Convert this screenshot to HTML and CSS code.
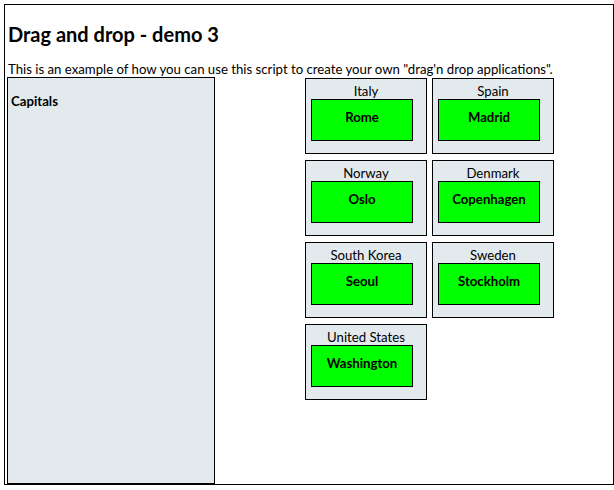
FILE: index.html
```html
<!DOCTYPE html>
<html>
<head>
<meta charset="utf-8">
<link rel="stylesheet" href="styles.css">
</head>
<body>
<div class="frame">
  <h2 class="title">Drag and drop - demo 3</h2>
  <p class="intro">This is an example of how you can use this script to create your own "drag'n drop applications".</p>
  <div class="workspace">
    <div class="capitals">
      <div class="capitals-title">Capitals</div>
    </div>
    <div class="countries">
      <div class="country"><div class="country-name">Italy</div><div class="capital">Rome</div></div>
      <div class="country"><div class="country-name">Spain</div><div class="capital">Madrid</div></div>
      <div class="country"><div class="country-name">Norway</div><div class="capital">Oslo</div></div>
      <div class="country"><div class="country-name">Denmark</div><div class="capital">Copenhagen</div></div>
      <div class="country"><div class="country-name">South Korea</div><div class="capital">Seoul</div></div>
      <div class="country"><div class="country-name">Sweden</div><div class="capital">Stockholm</div></div>
      <div class="country"><div class="country-name">United States</div><div class="capital">Washington</div></div>
    </div>
  </div>
</div>
</body>
</html>
```
FILE: styles.css
```css
html, body {
  margin: 0;
  padding: 0;
  background: #fff;
}
body {
  padding: 4px;
  font-family: "Lato", "DejaVu Sans", sans-serif;
  font-size: 13.2px;
  color: #000;
}
.frame {
  width: 605px;
  height: 479px;
  border: 1px solid #000;
  padding: 0 1px 0 2px;
}
.title {
  margin: 18px 0 15px 1px;
  font-size: 20px;
  line-height: 23px;
  font-weight: bold;
}
.intro {
  margin: 0 0 0 1px;
  line-height: 16px;
  height: 16px;
}
.workspace {
  display: flex;
  align-items: flex-start;
}
.capitals {
  width: 206px;
  height: 405px;
  border: 1px solid #000;
  background: #e2eaed;
}
.capitals-title {
  font-weight: bold;
  padding: 15px 0 0 3px;
  line-height: 16px;
}
.countries {
  margin: 1px 0 0 90px;
  display: grid;
  grid-template-columns: 122px 122px;
  column-gap: 5px;
  row-gap: 6px;
}
.country {
  width: 120px;
  height: 74px;
  border: 1px solid #000;
  background: #e2eaed;
}
.country-name {
  text-align: center;
  padding-top: 4px;
  line-height: 16px;
  height: 16px;
}
.capital {
  margin-left: 5px;
  width: 100px;
  height: 40px;
  border: 1px solid #000;
  background: #00ff00;
  font-weight: bold;
  text-align: center;
  line-height: 34px;
}
```
